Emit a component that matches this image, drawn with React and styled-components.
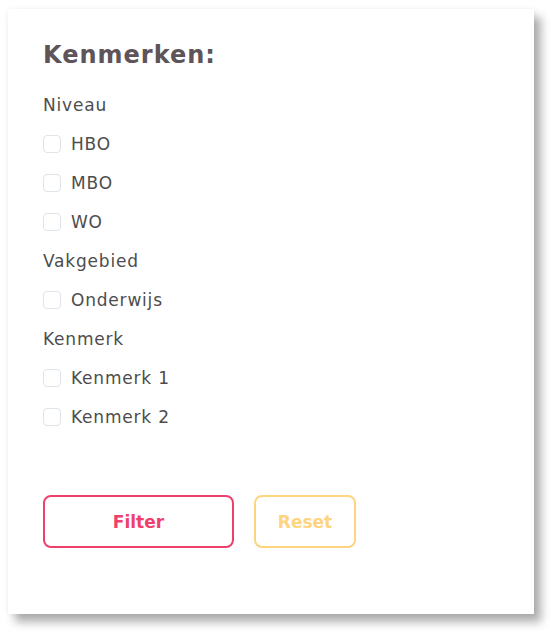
import React from "react";
import styled, { createGlobalStyle } from "styled-components";

const Global = createGlobalStyle`
  body {
    margin: 0;
    background: #fff;
    font-family: "DejaVu Sans", "Noto Sans", sans-serif;
  }
`;

const groups = [
  { label: "Niveau", items: ["HBO", "MBO", "WO"] },
  { label: "Vakgebied", items: ["Onderwijs"] },
  { label: "Kenmerk", items: ["Kenmerk 1", "Kenmerk 2"] },
];

const App = () => {
  return (
    <Page>
      <Global />
      <Card>
        <Title>Kenmerken:</Title>
        <List>
          {groups.map((g) => (
            <React.Fragment key={g.label}>
              <GroupLabel>{g.label}</GroupLabel>
              {g.items.map((item) => (
                <Option key={item}>
                  <Box type="checkbox" />
                  <span>{item}</span>
                </Option>
              ))}
            </React.Fragment>
          ))}
        </List>
        <Actions>
          <Button $color="#ef3f6d" $width="191px">Filter</Button>
          <Button $color="#ffd480" $width="102px">Reset</Button>
        </Actions>
      </Card>
    </Page>
  );
};
export default App;

const Page = styled.div`
  padding: 9px 0 0 8px;
  height: 634px;
  box-sizing: border-box;
`;

const Card = styled.div`
  width: 526px;
  height: 605px;
  box-sizing: border-box;
  background: #fff;
  padding: 31px 35px 0;
  box-shadow: 0 0 6px rgba(0, 0, 0, 0.06), 7px 8px 9px rgba(0, 0, 0, 0.32);
  display: flex;
  flex-direction: column;
`;

const Title = styled.h2`
  margin: 0 0 15px;
  font-size: 24px;
  line-height: 30px;
  font-weight: 700;
  letter-spacing: 1px;
  color: #5e5459;
`;

const List = styled.div`
  display: flex;
  flex-direction: column;
`;

const GroupLabel = styled.div`
  height: 39px;
  display: flex;
  align-items: center;
  font-size: 17px;
  letter-spacing: 0.8px;
  color: #4d4d4d;
`;

const Option = styled.label`
  height: 39px;
  display: flex;
  align-items: center;
  gap: 10px;
  font-size: 17px;
  letter-spacing: 0.8px;
  color: #4d4d4d;
`;

const Box = styled.input`
  appearance: none;
  margin: 0;
  width: 18px;
  height: 18px;
  box-sizing: border-box;
  border: 1px solid #dfe4ea;
  border-radius: 4px;
  background: #fff;
`;

const Actions = styled.div`
  display: flex;
  gap: 20px;
  margin-top: 59px;
`;

const Button = styled.button`
  width: ${(p) => p.$width};
  height: 53px;
  background: #fff;
  border: 2px solid ${(p) => p.$color};
  border-radius: 8px;
  color: ${(p) => p.$color};
  font-family: inherit;
  font-size: 17px;
  font-weight: 700;
`;
